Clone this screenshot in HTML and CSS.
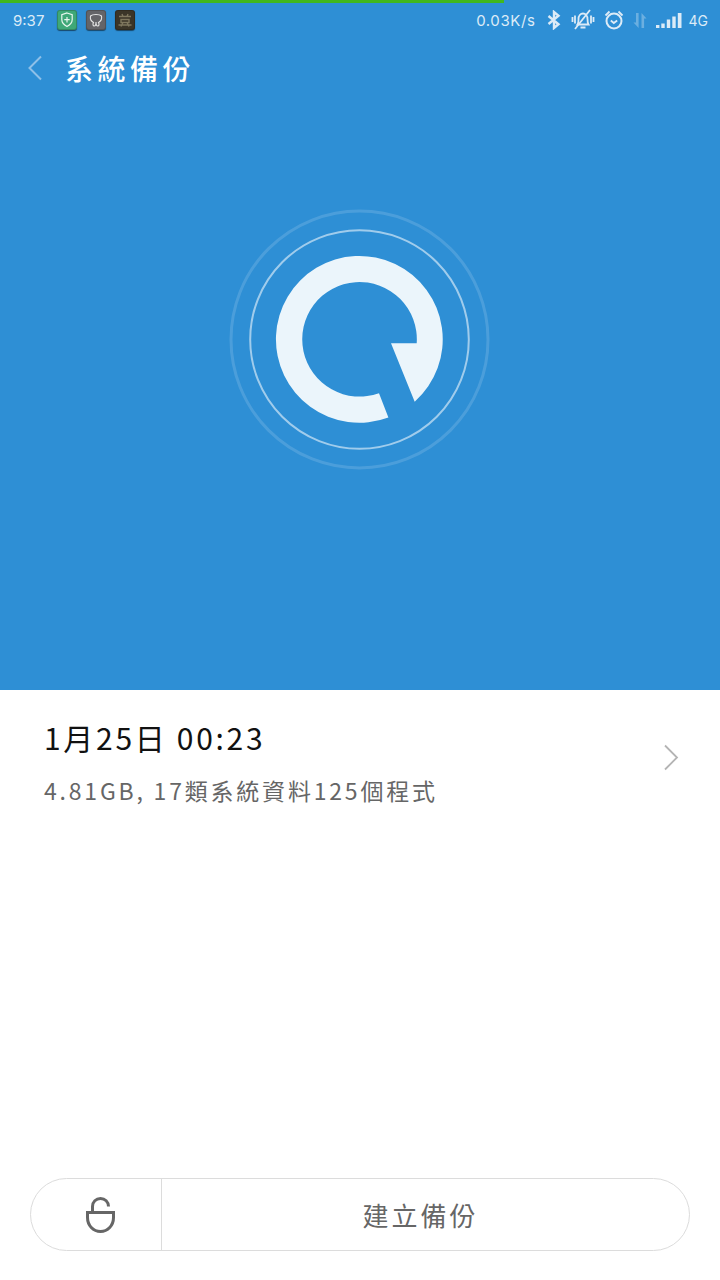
FILE: index.html
```html
<!DOCTYPE html>
<html lang="zh-Hant">
<head>
<meta charset="utf-8">
<title>系統備份</title>
<link rel="stylesheet" href="styles.css">
</head>
<body>
<div class="load-bar"></div>
<header class="hero">
  <div class="status">
    <span class="clock">9:37</span>
    <span class="note note-green">
      <svg viewBox="0 0 20 20" width="20" height="20"><path d="M10 3l5.200 1.700v4.800c0 3.200-2.300 5.500-5.200 7-2.900-1.500-5.200-3.800-5.200-7V4.700z" fill="none" stroke="#e8f6ee" stroke-width="1.200"/><path d="M10 7v5.400M7.300 9.700h5.400" stroke="#e8f6ee" stroke-width="1.200"/></svg>
    </span>
    <span class="note note-grey">
      <svg viewBox="0 0 20 20" width="20" height="20"><path d="M4.500 6c2-2 9-2 11 0 .6 3-1 5.500-3 6.500.8 1.500.8 3.500-.8 3.500-1.200 0-1.700-2-1.700-4 0 2-.5 4-1.700 4-1.600 0-1.600-2-.8-3.500-2-1-3.600-3.500-3-6.500z" fill="none" stroke="#e4e4e4" stroke-width="1.100"/></svg>
    </span>
    <span class="note note-dark">
      <svg viewBox="0 0 20 20" width="20" height="20"><path d="M4 6.500h12M7 4l1 2.500M13 4l-1 2.500M6 9.500h8v3H6zM3.500 15h13M8 12.500L6 16.500M12 12.500l2 4" fill="none" stroke="#7f775e" stroke-width="1.400"/></svg>
    </span>
    <span class="status-right">
      <span class="speed">0.03K/s</span>
      <svg class="ico ico-bt" viewBox="0 0 16 20" width="16" height="20"><path d="M2.500 6l10 8.200L8 18V2l4.500 3.800-10 8.200" fill="none" stroke="#dcebf7" stroke-width="2.400"/></svg>
      <svg class="ico ico-mute" viewBox="0 0 24 22" width="24" height="22"><path d="M6.500 15.500c1.200-1.500 1-3.500 1-5.500 0-3.200 2-5.500 4.500-5.500s4.500 2.300 4.500 5.500c0 2 0 4 1 5.500zM9.500 18.500h5M1.500 8v5M4 6.500v8M20 6.500v8M22.500 8v5" fill="none" stroke="#dcebf7" stroke-width="1.800"/><path d="M4 20L19 1" stroke="#dcebf7" stroke-width="1.800"/></svg>
      <svg class="ico ico-alarm" viewBox="0 0 20 20" width="20" height="20"><circle cx="10" cy="11" r="7.500" fill="none" stroke="#dcebf7" stroke-width="2"/><path d="M6.800 10.500l3 2.500 3.400-2.500M1.500 5.500L5.500 1.500M18.500 5.500l-4-4" fill="none" stroke="#dcebf7" stroke-width="1.800"/></svg>
      <svg class="ico ico-data" viewBox="0 0 16 20" width="16" height="20"><path d="M4 3h2.600v15L1.500 12.500H4zM9.500 18V3l5 5.500h-2.400V18z" fill="#dcebf7"/></svg>
      <svg class="ico ico-signal" viewBox="0 0 26 20" width="26" height="20"><path d="M0 15h3.400v3H0zM5.300 13.500h3.400V18H5.300zM10.800 9.500h3.400V18h-3.400zM16.300 6.500h3.400V18h-3.400zM21.800 3h3.700v15h-3.700z" fill="#dcebf7"/></svg>
      <span class="net">4G</span>
    </span>
  </div>
  <div class="titlebar">
    <svg class="back" viewBox="0 0 16 28" width="16" height="28"><path d="M14 2.500L2.500 14 14 25.500" fill="none" stroke="#8ec0e8" stroke-width="2"/></svg>
    <h1 class="title">系統備份</h1>
  </div>
  <div class="emblem">
    <svg viewBox="0 0 280 280" width="280" height="280">
      <circle class="ring-outer" cx="139.500" cy="139.500" r="128.500"/>
      <circle class="ring-inner" cx="139.500" cy="139.500" r="109.300"/>
      <path class="mark" d="M196.700 143.300H171L194.700 201.700A83.400 83.400 0 1 0 168.400 217.500L159 193.200A57.300 57.300 0 1 1 196.700 143.300Z"/>
    </svg>
  </div>
</header>
<main class="content">
  <section class="record">
    <div class="record-text">
      <div class="record-date">1月25日 00:23</div>
      <div class="record-meta">4.81GB, 17類系統資料125個程式</div>
    </div>
    <svg class="chevron" viewBox="0 0 16 28" width="16" height="28"><path d="M2 1.500l12 12-12 12" fill="none" stroke="#b4b4b4" stroke-width="1.800"/></svg>
  </section>
</main>
<footer class="actions">
  <div class="pill">
    <button class="pill-lock" type="button">
      <svg viewBox="0 0 29 36" width="29" height="36"><path d="M6.500 15V9.500C6.500 4.800 10 1.500 14.500 1.500s8 3.300 8 8" fill="none" stroke="#666" stroke-width="3"/><path d="M1.500 15.500h26v5c0 8-5.800 14-13 14s-13-6-13-14z" fill="none" stroke="#666" stroke-width="3"/></svg>
    </button>
    <button class="pill-main" type="button">建立備份</button>
  </div>
</footer>
</body>
</html>
```

FILE: styles.css
```css
* { box-sizing: border-box; }

html, body {
  margin: 0;
  height: 1280px;
}

body {
  position: relative;
  display: flex;
  flex-direction: column;
  background: #fff;
  font-family: "Noto Sans CJK TC", "Noto Sans", sans-serif;
  overflow: hidden;
}

/* thin page-load indicator along the top edge */
.load-bar {
  position: absolute;
  top: 0;
  left: 0;
  width: 504px;
  height: 3px;
  background: #41b81e;
}

.hero {
  height: 690px;
  flex: none;
  background: #2e8fd5;
  color: #fff;
}

.status {
  display: flex;
  align-items: center;
  height: 40px;
  padding: 0 12px 0 13px;
  color: #dcebf7;
  font-family: "Inter", sans-serif;
}

.clock {
  font-size: 15px;
  width: 44px;
}

.note {
  display: block;
  width: 20px;
  height: 20px;
  margin-right: 9px;
  border-radius: 3px;
  box-shadow: 0 1px 1px rgba(0, 0, 0, .5), inset 0 0 0 1px rgba(0, 0, 0, .18);
}
.note svg { display: block; }
.note-green { background: #3fa878; }
.note-grey { background: #646468; }
.note-dark { background: #3b3528; }

.status-right {
  margin-left: auto;
  display: flex;
  align-items: center;
}

.speed {
  font-size: 15px;
  letter-spacing: .6px;
}

.ico { display: block; }
.ico-bt { margin-left: 10px; }
.ico-mute { margin-left: 9px; }
.ico-alarm { margin-left: 9px; }
.ico-data { margin-left: 8px; opacity: .35; }
.ico-signal { margin-left: 8px; }

.net { font-size: 14px; margin-left: 7px; }

.titlebar {
  display: flex;
  align-items: center;
  height: 56px;
  padding-left: 27px;
}

.back { display: block; margin-right: 22px; }

.title {
  margin: 0;
  font-size: 28px;
  line-height: 56px;
  font-weight: 500;
  letter-spacing: 4.5px;
}

.emblem {
  display: flex;
  justify-content: center;
  padding-top: 104px;
}
.emblem svg { display: block; }

.ring-outer { fill: none; stroke: rgba(255, 255, 255, .14); stroke-width: 3; }
.ring-inner { fill: none; stroke: rgba(255, 255, 255, .55); stroke-width: 2; }
.mark { fill: #ebf5fb; }

.content { flex: 1; }

.record {
  display: flex;
  align-items: center;
  justify-content: space-between;
  padding: 27px 41px 0 44px;
}

.record-date {
  font-size: 30px;
  line-height: 40px;
  letter-spacing: 2.7px;
  color: #111;
}

.record-meta {
  margin-top: 18px;
  font-size: 23px;
  line-height: 30px;
  letter-spacing: 2.8px;
  color: #666;
}

.chevron { display: block; margin-bottom: 6px; }

.actions {
  flex: none;
  padding: 0 30px 29px;
}

.pill {
  display: flex;
  height: 73px;
  border: 1px solid #dcdcdc;
  border-radius: 37px;
  background: #fff;
}

.pill-lock,
.pill-main {
  border: 0;
  padding: 0;
  background: none;
  font-family: inherit;
}

.pill-lock {
  display: flex;
  align-items: center;
  justify-content: center;
  width: 131px;
  padding-left: 9px;
  border-right: 1px solid #dcdcdc;
}
.pill-lock svg { display: block; }

.pill-main {
  flex: 1;
  padding-right: 10px;
  font-size: 26px;
  color: #666;
  letter-spacing: 3px;
}
```
